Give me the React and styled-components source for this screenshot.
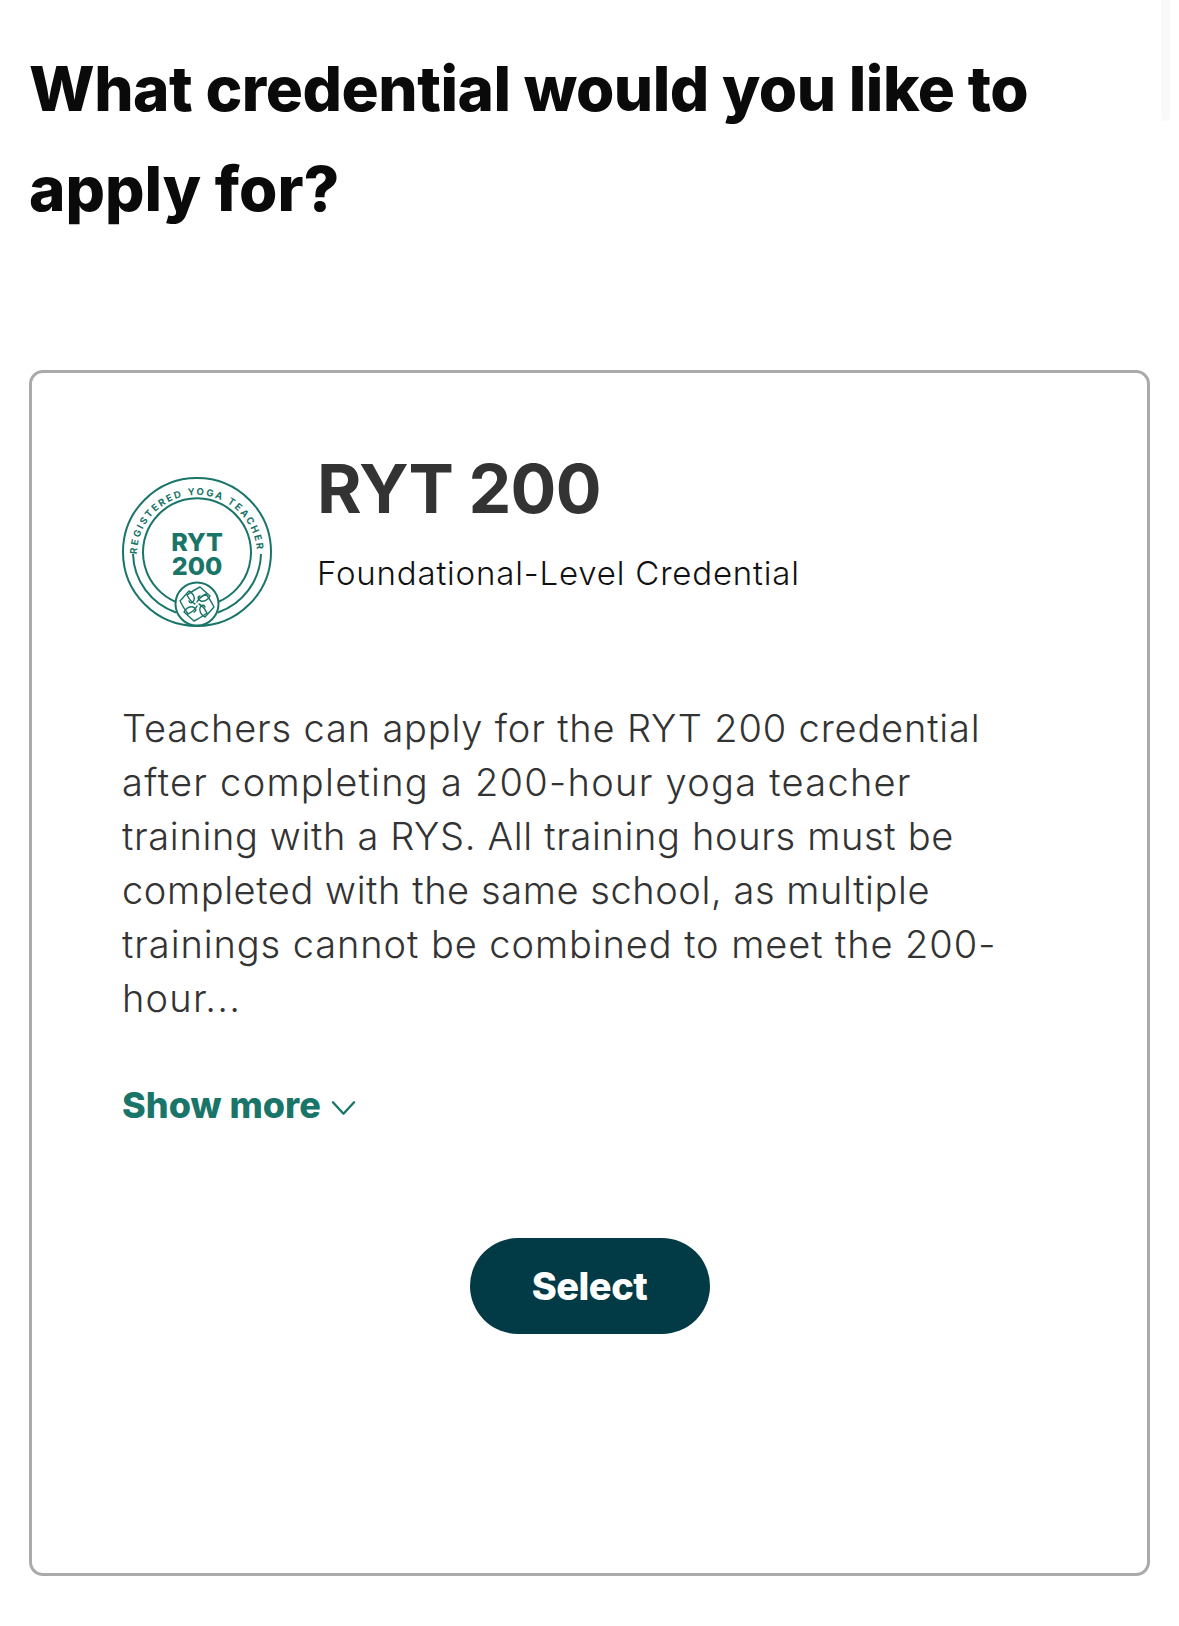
import React from "react";
import styled, { createGlobalStyle } from "styled-components";

const Global = createGlobalStyle`
  html, body { margin: 0; padding: 0; background: #fff; }
  body { font-family: "Inter", "Lato", sans-serif; font-variant-ligatures: none; }
`;

const Page = styled.main`
  position: relative;
  width: 1179px;
  height: 1626px;
  padding: 39px 29px 0 29px;
  box-sizing: border-box;
  overflow: hidden;
`;

const ScrollEdge = styled.div`
  position: absolute;
  top: -10px;
  right: 9px;
  width: 9px;
  height: 131px;
  background: #f9f9f9;
  border-radius: 5px;
`;

const Title = styled.h1`
  margin: 0 0 131px;
  font-size: 62px;
  line-height: 100px;
  font-weight: 800;
  color: #0a0a0a;
`;

const Line = styled.span`
  display: block;
  white-space: nowrap;
  letter-spacing: ${(p) => p.$track}px;
`;

const Card = styled.section`
  box-sizing: border-box;
  height: 1206px;
  border: 3px solid #aaaaaa;
  border-radius: 14px;
  padding: 72px 90px 0 90px;
  display: flex;
  flex-direction: column;
`;

const Header = styled.header`
  display: flex;
  align-items: flex-start;
  gap: 45px;
`;

const Badge = styled.svg`
  width: 150px;
  height: 150px;
  margin-top: 32px;
  flex: none;
`;

const HeaderText = styled.div`
  display: flex;
  flex-direction: column;
`;

const Name = styled.h2`
  margin: 0;
  font-size: 68px;
  line-height: 86px;
  font-weight: 700;
  letter-spacing: -0.75px;
  color: #333333;
`;

const Level = styled.p`
  margin: 20px 0 0;
  font-size: 33px;
  line-height: 44px;
  font-weight: 300;
  letter-spacing: 0.82px;
  color: #111111;
`;

const Description = styled.p`
  margin: 74px 0 0;
  font-size: 38px;
  line-height: 54px;
  font-weight: 300;
  color: #333333;
`;

const ShowMore = styled.button`
  align-self: flex-start;
  display: flex;
  align-items: center;
  gap: 10px;
  margin-top: 55px;
  padding: 0;
  border: 0;
  background: none;
  font: 800 36px/50px "Inter", sans-serif;
  color: #1a7569;
`;

const Chevron = styled.svg`
  width: 25px;
  height: 16px;
  margin-top: 6px;
`;

const SelectButton = styled.button`
  align-self: center;
  margin-top: 108px;
  width: 240px;
  height: 96px;
  border: 0;
  border-radius: 48px;
  background: #023a45;
  color: #fff;
  font: 800 38px/1 "Inter", sans-serif;
  letter-spacing: -0.5px;
`;

const petal = "M -10 -9 C -6 -12 -1 -15 3 -17 L 13 -8 C 11 -4 7 -2 4 -3 C 1 -4 0 -7 3 -8 M -10 -9 C -8 -5 -6 -2 -2 0";

const BadgeMark = () => (
  <Badge viewBox="0 0 150 150" fill="none" stroke="#1a7569">
    <defs>
      <path id="ringText" d="M 15 78 A 60 60 0 1 1 135 78" />
    </defs>
    <circle cx="75" cy="75" r="74" strokeWidth="2" />
    <path d="M 11 77 A 64 64 0 0 0 54 135.5" strokeWidth="2" />
    <path d="M 139 77 A 64 64 0 0 1 96 135.5" strokeWidth="2" />
    <path d="M 54 125 A 54 54 0 1 1 96 125" strokeWidth="2" />
    <text fill="#1a7569" stroke="none" fontFamily="Inter, sans-serif" fontWeight="700" fontSize="9.6" letterSpacing="2">
      <textPath href="#ringText" startOffset="0.5%">REGISTERED YOGA TEACHER</textPath>
    </text>
    <text x="75" y="74" textAnchor="middle" fill="#1a7569" stroke="none" fontFamily="Inter, sans-serif" fontWeight="800" fontSize="25">RYT</text>
    <text x="75" y="98" textAnchor="middle" fill="#1a7569" stroke="none" fontFamily="Inter, sans-serif" fontWeight="800" fontSize="25">200</text>
    <circle cx="75" cy="127" r="21.5" fill="#fff" strokeWidth="2" />
    <g strokeWidth="1.4" strokeLinejoin="round" strokeLinecap="round">
      {[0, 90, 180, 270].map((turn) => (
        <path key={turn} d={petal} transform={`translate(75 127) rotate(${turn})`} />
      ))}
    </g>
  </Badge>
);

export default function App() {
  return (
    <Page>
      <Global />
      <ScrollEdge />
      <Title>
        <Line $track={-0.47}>What credential would you like to</Line>
        <Line $track={0}>apply for?</Line>
      </Title>
      <Card>
        <Header>
          <BadgeMark />
          <HeaderText>
            <Name>RYT 200</Name>
            <Level>Foundational-Level Credential</Level>
          </HeaderText>
        </Header>
        <Description>
          <Line $track={0.83}>Teachers can apply for the RYT 200 credential</Line>
          <Line $track={1.27}>after completing a 200-hour yoga teacher</Line>
          <Line $track={0.66}>training with a RYS. All training hours must be</Line>
          <Line $track={0.58}>completed with the same school, as multiple</Line>
          <Line $track={0.92}>trainings cannot be combined to meet the 200-</Line>
          <Line $track={1.2}>hour...</Line>
        </Description>
        <ShowMore>
          Show more
          <Chevron viewBox="0 0 26 16" fill="none" stroke="#1a7569" strokeWidth="2.4" strokeLinecap="round" strokeLinejoin="round">
            <path d="M 2 2 L 13 14 L 24 2" />
          </Chevron>
        </ShowMore>
        <SelectButton>Select</SelectButton>
      </Card>
    </Page>
  );
}
